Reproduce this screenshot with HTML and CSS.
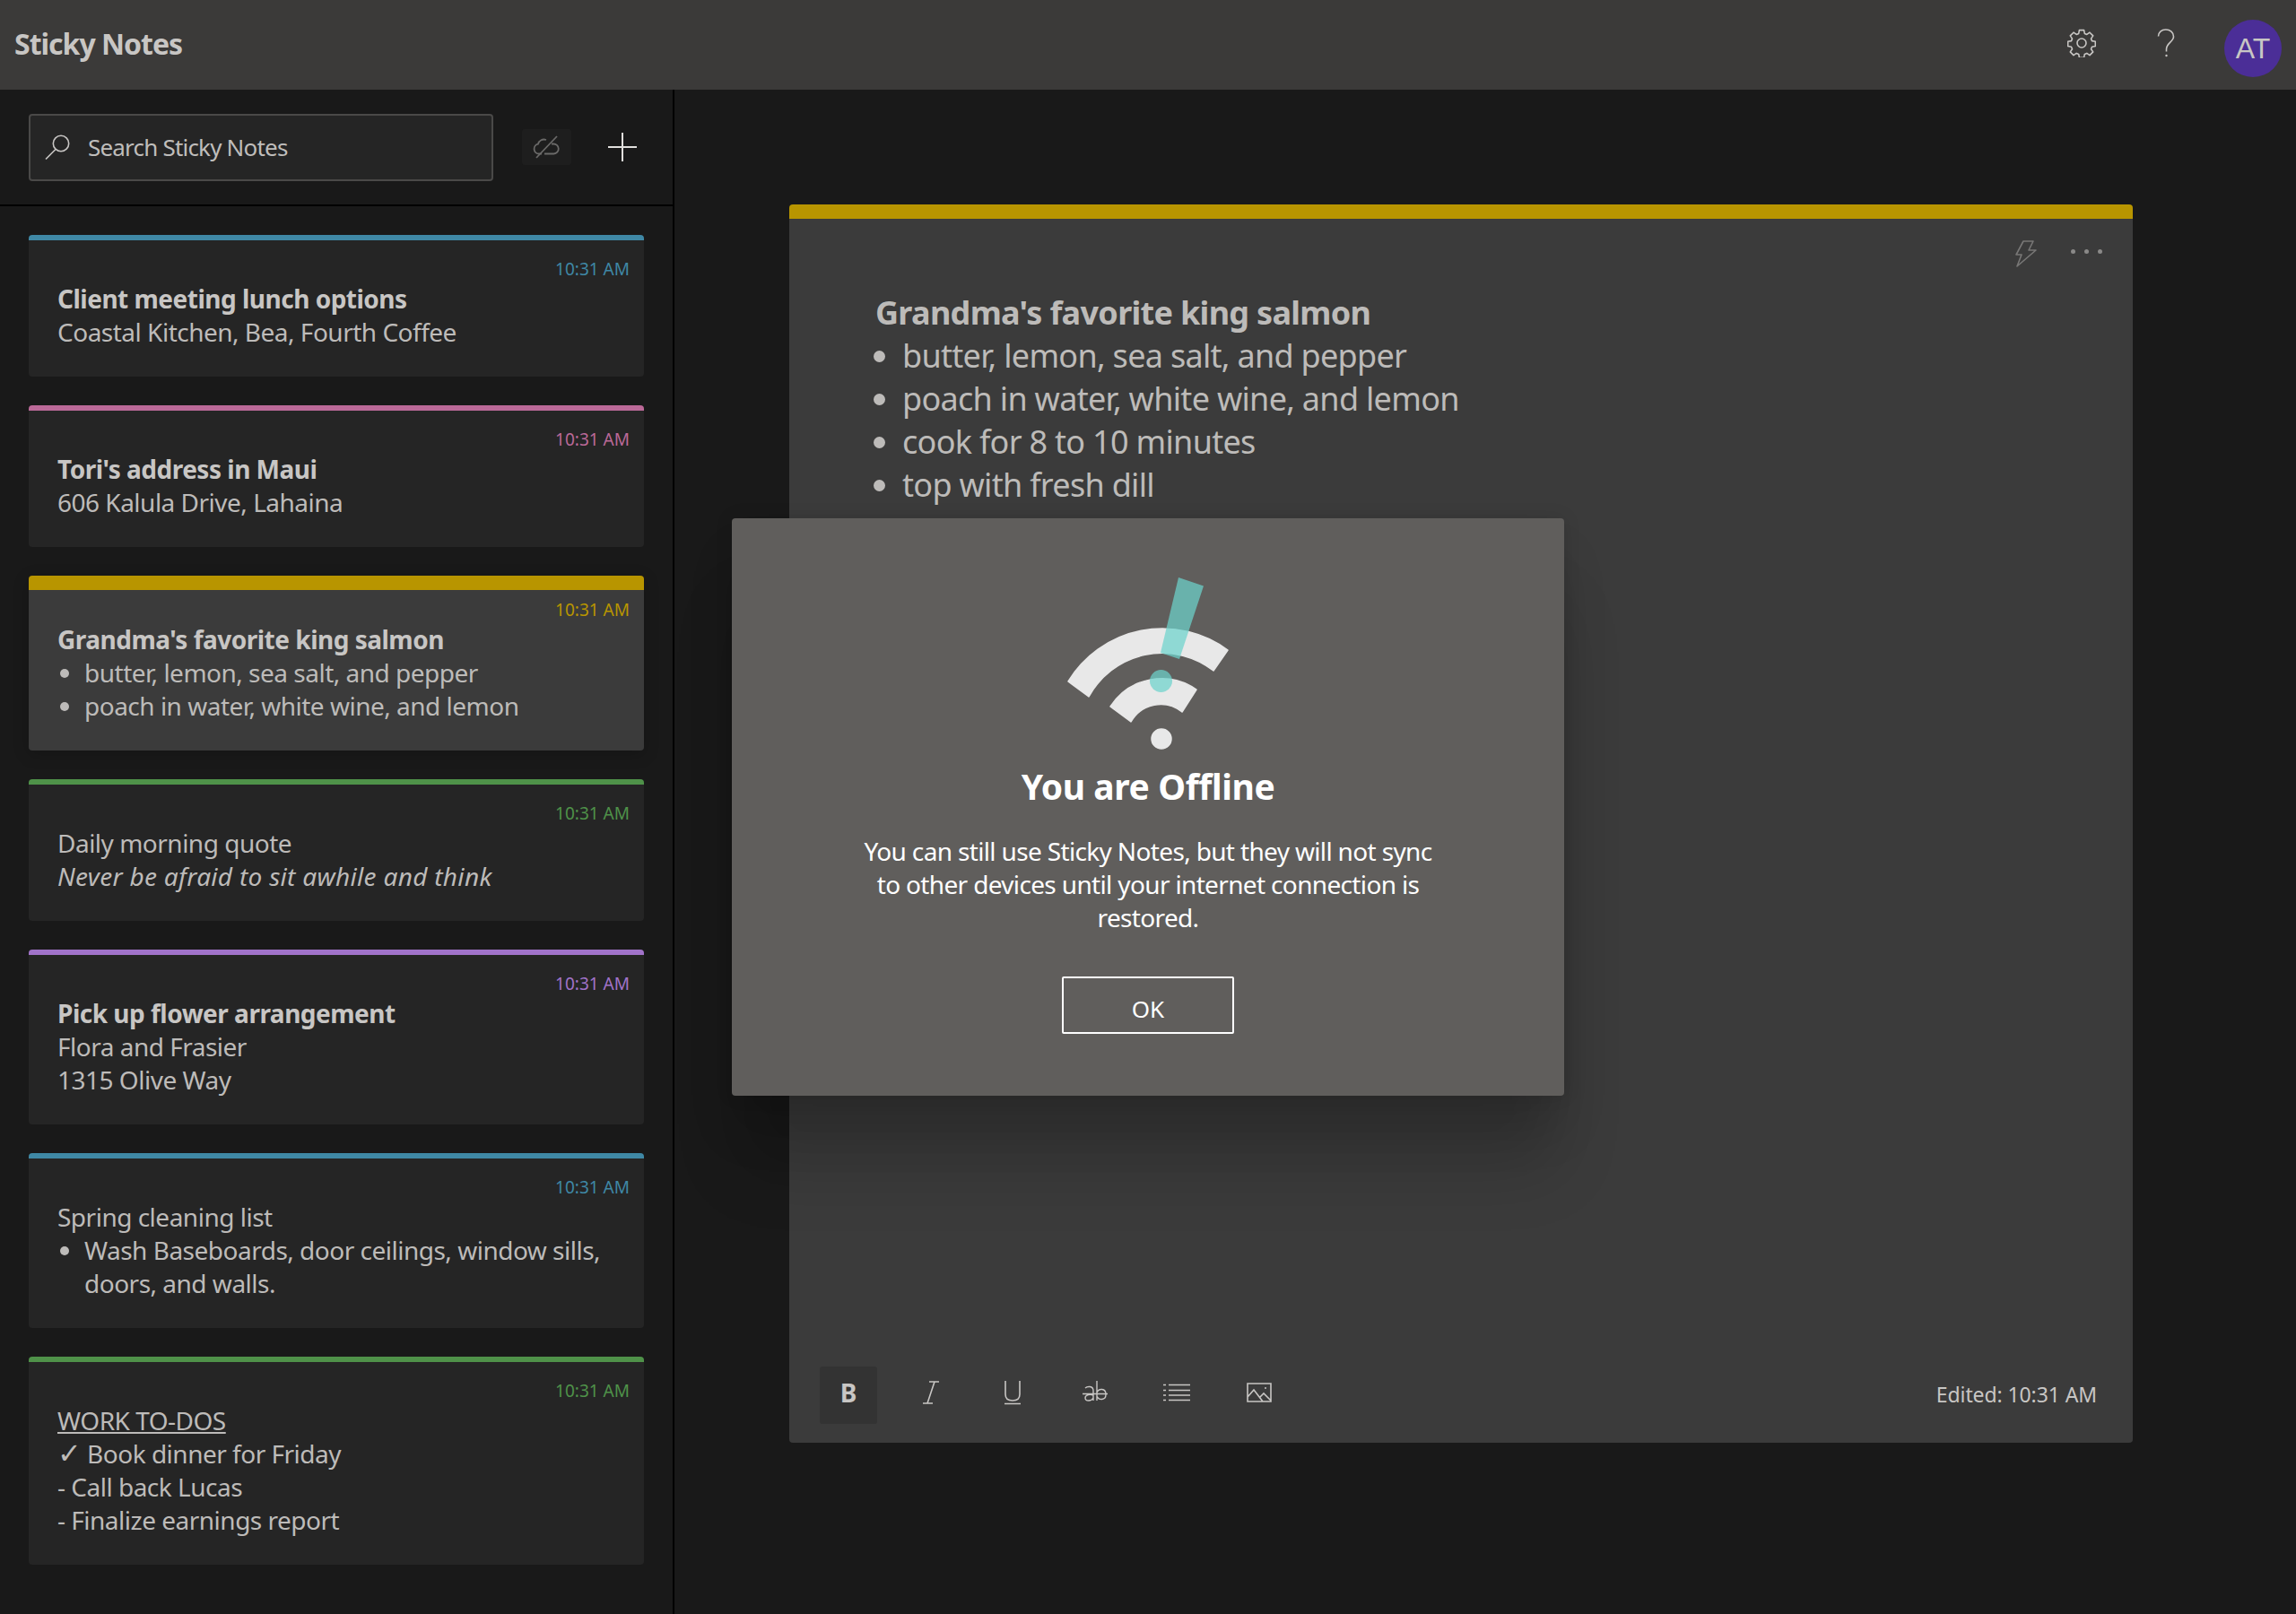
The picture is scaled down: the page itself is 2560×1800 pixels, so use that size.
FILE: index.html
```html
<!DOCTYPE html>
<html lang="en">

<head>
    <meta charset="UTF-8">
    <meta name="viewport" content="width=device-width, initial-scale=1.0">
    <title>Sticky Notes</title>
    <link rel="stylesheet" href="styles.css">
</head>

<body>

    <header class="topbar">
        <h1 class="app-title">Sticky Notes</h1>
        <svg class="top-icon gear-icon" viewBox="0 0 32 32" width="32" height="32">
            <path d="M13.4 1.6h5.2l.7 3.8 2.5 1 3.2-2.2 3.7 3.7-2.2 3.2 1 2.5 3.8.7v5.2l-3.8.7-1 2.5 2.2 3.2-3.7 3.7-3.2-2.2-2.5 1-.7 3.8h-5.2l-.7-3.8-2.5-1-3.2 2.2-3.7-3.7 2.2-3.2-1-2.5-3.8-.7v-5.2l3.8-.7 1-2.5-2.2-3.2 3.7-3.7 3.2 2.2 2.5-1z" fill="none" stroke="#c8c6c4" stroke-width="1.6" stroke-linejoin="round" />
            <circle cx="16" cy="16" r="5" fill="none" stroke="#c8c6c4" stroke-width="1.6" />
        </svg>
        <svg class="top-icon help-icon" viewBox="0 0 20 32" width="20" height="32">
            <path d="M1.5 8.5C1.5 4 5 1 9.800 1s8.700 3.200 8.700 7.800c0 6-8 7-8 14.200v2.500" fill="none" stroke="#c8c6c4" stroke-width="1.600" />
            <circle cx="10.500" cy="30" r="1.200" fill="#c8c6c4" />
        </svg>
        <div class="avatar">AT</div>
    </header>

    <div class="app-body">
        <aside class="sidebar">
            <div class="sidebar-head">
                <div class="search-box">
                    <svg viewBox="0 0 28 28" width="28" height="28">
                        <circle cx="18" cy="10" r="8.700" fill="none" stroke="#c8c6c4" stroke-width="1.600" />
                        <path d="M12 16.500 1 27.500" fill="none" stroke="#c8c6c4" stroke-width="1.600" />
                    </svg>
                    <span class="search-text">Search Sticky Notes</span>
                </div>
                <div class="cloud-btn">
                    <svg viewBox="0 0 32 26" width="32" height="26">
                        <path d="M10 20.500H7a5.500 5.500 0 0 1-1-10.900C7 5.500 11 3.500 15 5M21 9.500h2a5.500 5.500 0 0 1 .5 11H13" fill="none" stroke="#6b6a69" stroke-width="1.800" />
                        <path d="M4 25 27 1" fill="none" stroke="#6b6a69" stroke-width="1.800" />
                    </svg>
                </div>
                <svg class="plus-icon" viewBox="0 0 32 32" width="32" height="32">
                    <path d="M16 0v32M0 16h32" fill="none" stroke="#e1dfdd" stroke-width="2" />
                </svg>
            </div>

            <div class="note-list">
                <article class="note-card blue">
                    <time class="note-time">10:31 AM</time>
                    <div class="note-body">
                        <b>Client meeting lunch options</b>
                        <p>Coastal Kitchen, Bea, Fourth Coffee</p>
                    </div>
                </article>
                <article class="note-card pink">
                    <time class="note-time">10:31 AM</time>
                    <div class="note-body">
                        <b>Tori's address in Maui</b>
                        <p>606 Kalula Drive, Lahaina</p>
                    </div>
                </article>
                <article class="note-card yellow selected">
                    <time class="note-time">10:31 AM</time>
                    <div class="note-body">
                        <b>Grandma's favorite king salmon</b>
                        <ul>
                            <li>butter, lemon, sea salt, and pepper</li>
                            <li>poach in water, white wine, and lemon</li>
                        </ul>
                    </div>
                </article>
                <article class="note-card green">
                    <time class="note-time">10:31 AM</time>
                    <div class="note-body">
                        <p>Daily morning quote</p>
                        <p><i>Never be afraid to sit awhile and think</i></p>
                    </div>
                </article>
                <article class="note-card purple">
                    <time class="note-time">10:31 AM</time>
                    <div class="note-body">
                        <b>Pick up flower arrangement</b>
                        <p>Flora and Frasier</p>
                        <p>1315 Olive Way</p>
                    </div>
                </article>
                <article class="note-card blue">
                    <time class="note-time">10:31 AM</time>
                    <div class="note-body">
                        <p>Spring cleaning list</p>
                        <ul>
                            <li>Wash Baseboards, door ceilings, window sills, doors, and walls.</li>
                        </ul>
                    </div>
                </article>
                <article class="note-card green">
                    <time class="note-time">10:31 AM</time>
                    <div class="note-body">
                        <p><u>WORK TO-DOS</u></p>
                        <p><span class="check">✓</span> Book dinner for Friday</p>
                        <p>- Call back Lucas</p>
                        <p>- Finalize earnings report</p>
                    </div>
                </article>
            </div>
        </aside>

        <main class="editor-area">
            <section class="editor">
                <div class="editor-actions">
                    <svg viewBox="0 0 24 30" width="24" height="30">
                        <path d="M9 1h11l-5 10h8L2 29l5-13H1z" fill="none" stroke="#787776" stroke-width="1.600" stroke-linejoin="round" />
                    </svg>
                    <div class="dots"><span></span><span></span><span></span></div>
                </div>
                <div class="editor-text">
                    <b>Grandma's favorite king salmon</b>
                    <ul>
                        <li>butter, lemon, sea salt, and pepper</li>
                        <li>poach in water, white wine, and lemon</li>
                        <li>cook for 8 to 10 minutes</li>
                        <li>top with fresh dill</li>
                    </ul>
                </div>
                <div class="toolbar">
                    <div class="tool active"><span class="tool-b">B</span></div>
                    <div class="tool">
                        <svg viewBox="0 0 20 28" width="20" height="28">
                            <path d="M8 2h11M1 26h11M14 2 6 26" fill="none" stroke="#c8c6c4" stroke-width="1.600" />
                        </svg>
                    </div>
                    <div class="tool">
                        <svg viewBox="0 0 20 28" width="20" height="28">
                            <path d="M2 1v15c0 5 3 7 8 7s8-2 8-7V1M1 26.500h18" fill="none" stroke="#c8c6c4" stroke-width="1.600" />
                        </svg>
                    </div>
                    <div class="tool">
                        <svg viewBox="0 0 30 28" width="30" height="28">
                            <path d="M4 9c2-2 9-3 9 3v11M13 17c-3-1-9-1-9 3s7 4 9 0M17 1v22M17 14c2-5 10-5 10 2s-8 7-10 2M1 15.500h28" fill="none" stroke="#c8c6c4" stroke-width="1.400" />
                        </svg>
                    </div>
                    <div class="tool">
                        <svg viewBox="0 0 30 20" width="30" height="20">
                            <path d="M6 1.500h24M6 7.500h24M6 13h24M6 18.500h24M0 1.500h3M0 7.500h3M0 13h3M0 18.500h3" fill="none" stroke="#c8c6c4" stroke-width="1.600" />
                        </svg>
                    </div>
                    <div class="tool">
                        <svg viewBox="0 0 28 22" width="28" height="22">
                            <path d="M1 1h26v20H1zM1 16l7-8 10 13M15 16l4-4 8 8" fill="none" stroke="#c8c6c4" stroke-width="1.600" />
                            <circle cx="21" cy="6" r="1" fill="#c8c6c4" />
                        </svg>
                    </div>
                    <span class="edited">Edited: 10:31 AM</span>
                </div>
            </section>
        </main>
    </div>

    <div class="dialog">
        <svg class="offline-icon" viewBox="0 0 280 240" width="280" height="240">
            <g fill="#e8e8e8" stroke="#e8e8e8" stroke-width="1.500" stroke-linejoin="round">
                <path d="M51 140A123 123 0 0 1 229 105L213 128A93 93 0 0 0 74 157Z" />
                <path d="M98 168A68 68 0 0 1 194 149L178 174A38 38 0 0 0 121 185Z" />
                <circle cx="155" cy="204" r="11" />
            </g>
            <g fill="#6cd3cc" fill-opacity="0.72">
                <path d="M174 24 202 33.500 175 115 154 108Z" />
                <circle cx="154.500" cy="139.500" r="12.500" />
            </g>
        </svg>
        <h2 class="dialog-title">You are Offline</h2>
        <p class="dialog-text">You can still use Sticky Notes, but they will not sync to other devices until your internet connection is restored.</p>
        <button class="dialog-btn" type="button">OK</button>
    </div>

</body>

</html>
```

FILE: styles.css
```css
* {
    box-sizing: border-box;
}

html,
body {
    margin: 0;
    padding: 0;
    height: 1800px;
    overflow: hidden;
}

body {
    background-color: #191919;
    color: #c8c6c4;
    font-family: "Noto Sans", "DejaVu Sans", sans-serif;
    position: relative;
}

p,
ul,
h1,
h2 {
    margin: 0;
}

.topbar {
    height: 100px;
    background-color: #3b3a39;
    display: flex;
    align-items: center;
    padding-left: 16px;
}

.app-title {
    font-size: 32px;
    font-weight: 700;
    letter-spacing: -1px;
    margin-right: auto;
    margin-top: -4px;
}

.top-icon {
    margin-top: -4px;
}

.gear-icon {
    margin-right: 68px;
}

.help-icon {
    margin-right: 55px;
}

.avatar {
    width: 64px;
    height: 64px;
    border-radius: 50%;
    background-color: #4b2e97;
    margin-right: 16px;
    margin-top: 8px;
    font-family: "Liberation Sans", sans-serif;
    font-size: 32px;
    display: flex;
    align-items: center;
    justify-content: center;
}

.app-body {
    display: flex;
    height: 1700px;
}

.sidebar {
    width: 752px;
    border-right: 2px solid #000;
    flex-shrink: 0;
}

.sidebar-head {
    height: 130px;
    border-bottom: 2px solid #000;
    display: flex;
    align-items: center;
    padding-left: 32px;
}

.search-box {
    width: 518px;
    height: 75px;
    background-color: #252525;
    border: 2px solid #4a4948;
    border-radius: 4px;
    display: flex;
    align-items: center;
    padding-left: 16px;
    margin-right: 32px;
}

.search-text {
    font-size: 26px;
    margin-left: 20px;
    letter-spacing: -0.8px;
    color: #bfbdbb;
}

.cloud-btn {
    width: 55px;
    height: 40px;
    background-color: #1e1e1e;
    border-radius: 3px;
    display: flex;
    align-items: center;
    justify-content: center;
    margin-right: 41px;
}

.note-list {
    padding: 32px 32px 0;
    display: flex;
    flex-direction: column;
    gap: 32px;
}

.note-card {
    background-color: #252525;
    border-top: 6px solid;
    border-radius: 4px;
    padding: 18px 16px 31px 32px;
}

.note-card.selected {
    background-color: #3b3b3b;
    border-top-width: 16px;
    padding-top: 8px;
    box-shadow: 0 4px 18px rgba(0, 0, 0, 0.2);
}

.note-time {
    display: block;
    text-align: right;
    font-size: 19px;
    line-height: 28px;
    margin-bottom: 1px;
}

.note-body {
    font-size: 28px;
    line-height: 37px;
    letter-spacing: -0.5px;
    color: #bdbbb9;
}

.note-body b {
    display: block;
    color: #c8c6c4;
}

.note-body i {
    letter-spacing: 0.3px;
}

.note-body ul,
.editor-text ul {
    padding-left: 30px;
}

.check {
    font-size: 32px;
    line-height: 30px;
}

.blue {
    border-color: #3f88a5;
}

.blue .note-time {
    color: #3f88a5;
}

.pink {
    border-color: #bb6998;
}

.pink .note-time {
    color: #bb6998;
}

.yellow {
    border-color: #b89500;
}

.yellow .note-time {
    color: #b89500;
}

.green {
    border-color: #4f9249;
}

.green .note-time {
    color: #4f9249;
}

.purple {
    border-color: #a173c9;
}

.purple .note-time {
    color: #a173c9;
}

.editor-area {
    flex: 1;
    padding: 128px 182px 0 128px;
}

.editor {
    height: 1381px;
    background-color: #3b3b3b;
    border-top: 16px solid #b89500;
    border-radius: 4px;
    display: flex;
    flex-direction: column;
}

.editor-actions {
    display: flex;
    justify-content: flex-end;
    align-items: center;
    height: 30px;
    margin-top: 24px;
    padding-right: 34px;
}

.dots {
    display: flex;
    gap: 10px;
    margin-left: 38px;
    margin-bottom: 6px;
}

.dots span {
    width: 5px;
    height: 5px;
    border-radius: 50%;
    background-color: #8a8988;
}

.editor-text {
    flex: 1;
    padding: 27px 0 0 96px;
    font-size: 36px;
    line-height: 48px;
    letter-spacing: -0.7px;
    color: #bdbbb9;
}

.toolbar {
    display: flex;
    align-items: center;
    gap: 27.600px;
    padding: 0 40px 21px 34px;
}

.tool {
    width: 64px;
    height: 64px;
    border-radius: 3px;
    display: flex;
    align-items: center;
    justify-content: center;
    padding-bottom: 6px;
}

.tool.active {
    background-color: #333;
}

.tool-b {
    font-size: 28px;
    font-weight: 700;
}

.edited {
    margin-left: auto;
    margin-bottom: 3px;
    font-size: 23px;
    letter-spacing: -0.1px;
}

.dialog {
    position: absolute;
    left: 816px;
    top: 578px;
    width: 928px;
    height: 644px;
    background-color: #605e5c;
    border-radius: 4px;
    box-shadow: 0 40px 50px -6px rgba(0, 0, 0, 0.15), 0 90px 70px -10px rgba(0, 0, 0, 0.16), 0 0 20px rgba(0, 0, 0, 0.1);
    color: #fff;
    display: flex;
    flex-direction: column;
    align-items: center;
    padding-top: 42px;
}

.offline-icon {
    flex-shrink: 0;
}

.dialog-title {
    font-size: 39px;
    font-weight: 700;
    line-height: 50px;
    margin-top: -8px;
    letter-spacing: -0.4px;
}

.dialog-text {
    width: 650px;
    font-size: 28px;
    line-height: 37px;
    text-align: center;
    margin-top: 29px;
    letter-spacing: -0.65px;
}

.dialog-btn {
    width: 192px;
    height: 64px;
    margin-top: 47px;
    padding-top: 8px;
    background: none;
    border: 2px solid #fff;
    border-radius: 2px;
    color: #fff;
    font-family: inherit;
    font-size: 26px;
}
```
